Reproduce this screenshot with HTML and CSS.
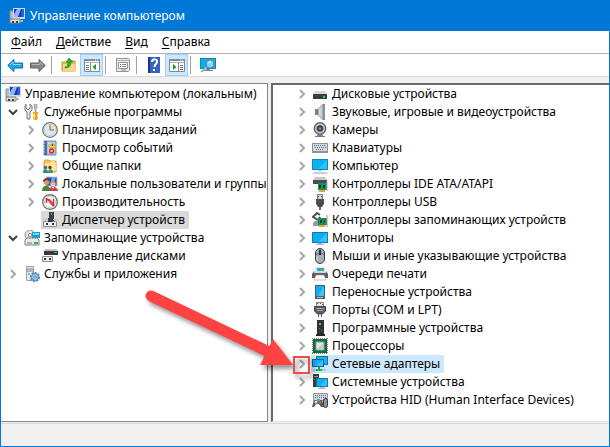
FILE: index.html
```html
<!DOCTYPE html>
<html lang="ru">
<head>
    <meta charset="UTF-8">
    <meta name="viewport" content="width=device-width, initial-scale=1.0">
    <title>Управление компьютером</title>
    <link rel="stylesheet" href="styles.css">
</head>
<body>
    <!-- Icon set -->
    <svg class="sprite" aria-hidden="true">
        <symbol id="chevron" viewBox="0 0 10 10"><path d="M3 1l4 4-4 4" fill="none" stroke="currentColor" stroke-width="2"/></symbol>
        <symbol id="i-manage" viewBox="0 0 16 16">
            <path d="M1 3h4v8H1z" fill="#b9bec4" stroke="#8b9097"/>
            <path d="M4 0h12v11H4z" fill="#d5d8dc"/><path d="M5 1h10v8H5z" fill="#1237b4"/><path d="M8 1h4l-3 8H5V6z" fill="#8fb4ff"/><path d="M13 1h2v8h-3z" fill="#2c62e0"/>
            <path d="M9 12h5v2H9z" fill="#b5b9bd"/><path d="M1 11h10v4H1z" fill="#dddbd2" stroke="#80858b"/><path d="M3 13h2v2H3zM7 13h2v2H7z" fill="#3c4148"/>
        </symbol>
        <symbol id="i-tools" viewBox="0 0 16 16">
            <path d="M2 0v4l2 2 2-2V0l2 2v4L6 8v7H3V8L1 6V2z" fill="#e2e5e8" stroke="#777d83"/>
            <path d="M10 0h3v4h-1v4h-1V4h-1z" fill="#bfc4c9" stroke="#7b8087" stroke-width=".5"/>
            <path d="M9 8h5v2l-1 1 1 3-1 2h-3l-1-2 1-3-1-1z" fill="#f0a21a"/><path d="M10 9h1v6h-1z" fill="#ffd878"/>
        </symbol>
        <symbol id="i-clock" viewBox="0 0 16 16">
            <circle cx="8" cy="8" r="7.3" fill="#f5f6f8" stroke="#70757b" stroke-width="1.3"/><circle cx="8" cy="8" r="5.7" fill="#dce8f2" stroke="#c2c6ca" stroke-width=".8"/>
            <path d="M8 8V2.5A5.500 5.500 0 0 1 13.500 8z" fill="#ffdc94"/><path d="M8 3v5h4" fill="none" stroke="#4e6c96"/>
        </symbol>
        <symbol id="i-events" viewBox="0 0 16 16">
            <path d="M2 1h12v14H2z" fill="#a9c4e4" stroke="#6c8cb2"/><path d="M2 1h3v14H2z" fill="#4a6e9d"/><path d="M1 3h2M1 6h2M1 9h2M1 12h2" stroke="#ddd"/>
            <path d="M6 3h7M6 8h3M6 10h2M6 12h3" stroke="#e8f1fb"/><path d="M10.500 2L14 8H7z" fill="#ffcd1c" stroke="#b78e1a" stroke-width=".5"/><path d="M10 4h1v2h-1z" fill="#333"/>
            <circle cx="9.500" cy="11" r="2.700" fill="#dd2c2c"/><path d="M8.500 10l2 2m0-2l-2 2" stroke="#fff" stroke-width=".8"/>
        </symbol>
        <symbol id="i-shared" viewBox="0 0 16 16">
            <path d="M2 3l1-1h4l1 1h6v11H2z" fill="#f2c45c" stroke="#d5a348"/><path d="M3 5h11v8H3z" fill="#ffe199"/><path d="M9 4h4" stroke="#fff"/>
            <circle cx="3.500" cy="9.500" r="1.700" fill="#42688c"/><circle cx="8" cy="9.500" r="1.700" fill="#684122"/><path d="M1 15c0-5 5-5 5 0z" fill="#188d9e"/><path d="M6 15c0-5 5-5 5 0z" fill="#2a9b76"/>
        </symbol>
        <symbol id="i-users" viewBox="0 0 16 16">
            <path d="M4 1h11v9H4z" fill="#174bbf" stroke="#bbc3ce"/><path d="M10 1h4l-3 8H8z" fill="#6ea5f8"/>
            <circle cx="4.500" cy="6" r="3" fill="#d89b66"/><path d="M1 6c0-5 6-5 7 0L5 4z" fill="#694027"/><circle cx="11" cy="8" r="2.500" fill="#efc39d"/><path d="M8 8c0-4 6-4 6 0l-3-2z" fill="#c69137"/>
            <path d="M0 15c0-7 8-7 9 0z" fill="#507e3c"/><path d="M7 15c0-6 8-6 9 0z" fill="#be4651"/><path d="M10 11l1 2 1-2z" fill="#fff"/>
        </symbol>
        <symbol id="i-perf" viewBox="0 0 16 16">
            <circle cx="8" cy="8" r="7.300" fill="#fff" stroke="#73777b" stroke-width="1.400"/><circle cx="8" cy="8" r="5.500" fill="#fff" stroke="#b9bdc1" stroke-width=".8"/><path d="M4.500 9V5l3 1 4 5V5" fill="none" stroke="#e02c2c" stroke-width="1.500"/><path d="M4 4l7 8" stroke="#c81d22"/>
        </symbol>
        <symbol id="i-devmgr" viewBox="0 0 16 16">
            <path d="M7 0h5v9H7z" fill="#3a3d40"/><path d="M9 1h1v2H9z" fill="#35d346"/><path d="M1 8l1-1h12l1 1z" fill="#bbb"/><path d="M1.500 9.500h13v5h-13z" fill="#f1f1f1" stroke="#8c8c8c"/><path d="M6 6h5v4H6z" fill="#3a3d40"/><path d="M4 11h2v2H4zM10 11h2v2h-2z" fill="#333"/>
        </symbol>
        <symbol id="i-storage" viewBox="0 0 16 16">
            <circle cx="6" cy="5" r="5" fill="#dfe3e7" stroke="#90969c"/><circle cx="6" cy="5" r="1.600" fill="#fff" stroke="#7e868e"/><path d="M8 2h8v6H8z" fill="#169fd3"/><path d="M9 3h6v2H9z" fill="#67d7f5"/>
            <path d="M1 10l2-2h10l2 2v5H1z" fill="#e8e9ea" stroke="#7d8186"/><path d="M3 13h5" stroke="#777"/><path d="M10 12h4v2h-4z" fill="#20bc3d"/>
        </symbol>
        <symbol id="i-diskmgr" viewBox="0 0 16 16">
            <path d="M3 1h11l2 2H2z" fill="#bfc1c3"/><path d="M2 3h14v4H2z" fill="#36393b"/><path d="M12 4h3v1h-3z" fill="#21d54a"/><path d="M.5 8.500h10v5H.5z" fill="#eee" stroke="#8e8e8e"/><path d="M2 10h2v2H2zM7 10h2v2H7z" fill="#333"/>
        </symbol>
        <symbol id="i-services" viewBox="0 0 16 16">
            <path d="M2.500.5h7v14h-7z" fill="#e5e9ed" stroke="#9ba2a8"/><path d="M3 3h6M3 5h6" stroke="#718493"/><path d="M4 8h2" stroke="#35a74a"/>
            <circle cx="11" cy="11" r="4" fill="none" stroke="#4f81ad" stroke-width="2" stroke-dasharray="2 1"/><circle cx="11" cy="11" r="3.500" fill="#a8cbe8" stroke="#5586b3"/><circle cx="11" cy="11" r="1.200" fill="#fff" stroke="#5586b3"/>
        </symbol>
        <symbol id="i-disk" viewBox="0 0 16 16"><path d="M3 5h10l2 3H1z" fill="#d6d8d9"/><path d="M1 8h14v5H1z" fill="#3b3d3f"/><path d="M11 10h2v2h-2z" fill="#20d64c"/></symbol>
        <symbol id="i-sound" viewBox="0 0 16 16"><path d="M3 5h3v6H3z" fill="#7b8085"/><path d="M6 5l5-5v16l-5-5z" fill="#c1c7cc" stroke="#858a8f" stroke-width=".7"/><path d="M11 0h2v16h-2z" fill="#8b9095"/><path d="M8 4v8" stroke="#e9ecef"/></symbol>
        <symbol id="i-camera" viewBox="0 0 16 16"><circle cx="8" cy="6.500" r="5.700" fill="#d6d8da" stroke="#606468" stroke-width="1.500"/><circle cx="8" cy="6.500" r="3.300" fill="#30353c" stroke="#747b82"/><circle cx="8" cy="6.500" r="1.300" fill="#739aca"/><path d="M6 12l-1 2H3v1h10v-1h-2l-1-2z" fill="#777b80"/></symbol>
        <symbol id="i-keyboard" viewBox="0 0 16 16"><path d="M0 3h16v10H0z" fill="#89949e"/><path d="M1 4h14v7H1z" fill="#d3dae0"/><path d="M2 5.500h12M3 7.500h11M4 9.500h8" stroke="#68737d" stroke-dasharray="1 1"/></symbol>
        <symbol id="i-computer" viewBox="0 0 16 16"><path d="M0 1h16v11H0z" fill="#1683b9"/><path d="M1 2h14v9H1z" fill="#09b4f3"/><path d="M15 2v9H6z" fill="#25c5ff"/><path d="M6 12h4v1H6z" fill="#bbb"/><path d="M2 14h12l2 2H0z" fill="#bdd0dd"/></symbol>
        <symbol id="i-ide" viewBox="0 0 16 16"><path d="M3 1h10l2 3H1z" fill="#c5c7c8"/><path d="M1 4h14v4H1z" fill="#4b4e50"/><path d="M6 7h9v7H6z" fill="#15905e"/><path d="M7 9h2v3H7zM11 9h2v3h-2z" fill="#073d2c"/><path d="M15 5v10" stroke="#aaa"/><path d="M7 14h6v2H7z" fill="#f1a31d"/></symbol>
        <symbol id="i-usb" viewBox="0 0 16 16"><path d="M5.500.5h5v5h-5z" fill="#d8dadd" stroke="#777b80"/><path d="M6 2h1v1H6zM9 2h1v1H9z" fill="#555"/><path d="M4 5h8v5l-2 3H6l-2-3z" fill="#494d50"/><path d="M7 13h2v3H7z" fill="#686d70"/></symbol>
        <symbol id="i-storctl" viewBox="0 0 16 16"><path d="M8 3L5 1 1 5l5 3 2-3" fill="none" stroke="#4d5052" stroke-width="2"/><path d="M1 11l2-2h5v5H1z" fill="#999c9e"/><path d="M6 6h9v7H6z" fill="#15905e"/><path d="M8 8h2v3H8zM12 8h1v3h-1z" fill="#073d2c"/><path d="M15 3v12" stroke="#999"/><path d="M7 13h6v2H7z" fill="#f1a31d"/></symbol>
        <symbol id="i-monitor" viewBox="0 0 16 16"><path d="M0 2h16v11H0z" fill="#167caf"/><path d="M1 3h14v9H1z" fill="#09aef0"/><path d="M15 3v9H6z" fill="#2dc5ff"/><path d="M6 13h4v1H6zM4 14h8v1H4z" fill="#a5b5c0"/></symbol>
        <symbol id="i-mouse" viewBox="0 0 16 16"><rect x="3.500" y=".5" width="9" height="15" rx="4.500" fill="#a7afb8" stroke="#363b40"/><path d="M4 6h8M8 1v5" stroke="#59616a"/><path d="M7 2h2v5H7z" fill="#272b2f"/><path d="M5 8v4" stroke="#e0e5ea"/></symbol>
        <symbol id="i-printer" viewBox="0 0 16 16"><path d="M3 1h10v5H3z" fill="#d7e8f2"/><path d="M5 2h3v3H5z" fill="#28a7d9"/><path d="M8 2h4v3H8z" fill="#49ad73"/><path d="M2 5h12l2 3v4H0V8z" fill="#5a5e62"/><path d="M2 5h12v2H2z" fill="#d6d9dc"/><path d="M4 9h8l2 5H2z" fill="#fff" stroke="#999" stroke-width=".6"/></symbol>
        <symbol id="i-portable" viewBox="0 0 16 16"><path d="M3 1h10v14H3z" fill="#4f5d67"/><path d="M4 2h8v10H4z" fill="#12aef2"/><path d="M12 2v10H6z" fill="#39c3ff"/><path d="M5 13.500h6" stroke="#bac4ca"/></symbol>
        <symbol id="i-port" viewBox="0 0 16 16"><path d="M4.500.5h7v4h-7z" fill="#e6e7e8" stroke="#888"/><path d="M5 1h1v1H5zM8 1h1v1H8zM10 2h1v1h-1z" fill="#555"/><path d="M2.500 4.500h11V9l-3 3h-5l-3-3z" fill="#5b5f62" stroke="#414447"/><path d="M4 6.500h8M5 8.500h6" stroke="#a2a5a7"/><path d="M6 12h1v3H6zM9 12h1v3H9z" fill="#555"/></symbol>
        <symbol id="i-software" viewBox="0 0 16 16"><path d="M5 0h7v14H5z" fill="#303335"/><path d="M7 3h2v2H7z" fill="#29ea44"/><path d="M7 8h1v1H7zM9 10h1v1H9z" fill="#777"/><path d="M4 14h9v2H4z" fill="#25282a"/></symbol>
        <symbol id="i-cpu" viewBox="0 0 16 16"><path d="M0 .5h16M0 15.500h16M.5 0v16M15.500 0v16" stroke="#9d8c42" stroke-dasharray="1 1"/><path d="M1 1h14v14H1z" fill="#0c6b4d"/><path d="M4 4h8v8H4z" fill="#e6e8e7" stroke="#8ca49b"/><path d="M11 5v6H5z" fill="#c7cccb"/></symbol>
        <symbol id="i-network" viewBox="0 0 16 16"><path d="M4 0h12v9H4z" fill="#0d76b4"/><path d="M5 1h10v7H5z" fill="#18b4f2"/><path d="M0 3h12v8H0z" fill="#0b669f"/><path d="M1 4h10v6H1z" fill="#17adef"/><path d="M11 4v6H4z" fill="#38c5fb"/><path d="M7 11v2" stroke="#22a959" stroke-width="2"/><path d="M1 14h13" stroke="#8fa2a9"/><path d="M4 13h6v2H4z" fill="#22a959"/></symbol>
        <symbol id="i-system" viewBox="0 0 16 16"><path d="M1 0h6v13H1z" fill="#3b3e40"/><path d="M2 2.500h4" stroke="#999"/><path d="M2 5h1v1H2z" fill="#23e13f"/><path d="M4 4h12v9H4z" fill="#1474a4"/><path d="M5 5h10v7H5z" fill="#11aef1"/><path d="M15 5v7H8z" fill="#30c3ff"/><path d="M8 13h4v1H8zM6 14h8v1H6z" fill="#aebdc6"/></symbol>
        <symbol id="i-hid" viewBox="0 0 16 16"><path d="M1.500 1.500h14v7h-14z" fill="#d3d9de" stroke="#8f979d"/><path d="M3 3.500h12M3 5.500h12" stroke="#636b71" stroke-dasharray="1 1"/><path d="M2 8h8l2 7H9l-2-3H4l-2 3H0z" fill="#50595f"/><circle cx="4" cy="10" r="1.500" fill="#d6e0e7"/><circle cx="8" cy="10" r="1.500" fill="#e4573d"/><path d="M5 7h3v2H5z" fill="#2ab1ea"/><rect x="11.500" y="6.500" width="4" height="9" rx="2" fill="#8b949d" stroke="#34383b"/></symbol>
        <symbol id="i-back" viewBox="0 0 16 16"><path d="M.7 8.500L7 2.500v3.500h8.500v5H7v3.500z" fill="#1aa9e4" stroke="#096da8" stroke-linejoin="round"/><path d="M3 8l3-3v2.500h8" fill="none" stroke="#81dafa"/></symbol>
        <symbol id="i-forward" viewBox="0 0 16 16"><path d="M15.300 8.500L9 2.500v3.500H.5v5H9v3.500z" fill="#858585" stroke="#606060" stroke-linejoin="round"/><path d="M2 7.500h8V5l3 3" fill="none" stroke="#b4b4b4"/></symbol>
        <symbol id="i-up" viewBox="0 0 16 16"><path d="M1 5h6l1-1h6v10H1z" fill="#e4b656" stroke="#c49a44"/><path d="M2 7h12v7H2z" fill="#f6d783"/><path d="M4 10c2 0 3-2 3-5H5l3-4 4 4h-2c0 4-2 6-6 6z" fill="#24b324" stroke="#158116" stroke-width=".5"/></symbol>
        <symbol id="i-tree" viewBox="0 0 16 16"><path d="M.5 2.500h15v12H.5z" fill="#fff" stroke="#858a90"/><path d="M0 2h16v2H0z" fill="#858a90"/><path d="M1 5.500h14" stroke="#aeb3b8"/><path d="M11 3h1M13 3h1" stroke="#fff"/><path d="M6.500 6v8" stroke="#858a90"/><path d="M2 8.500h3M2 10.500h3M2 12.500h3" stroke="#687078"/><path d="M12 7v6l-3.500-3z" fill="#169b27"/></symbol>
        <symbol id="i-props" viewBox="0 0 16 16"><path d="M1.500 1.500h12l1 1v11l-1 1h-12z" fill="#eeeeef" stroke="#90959a"/><path d="M2 3.500h12" stroke="#a9adb1"/><path d="M3.500 5.500h9v6h-9z" fill="#fff" stroke="#8d949c"/><path d="M5 7h1v1H5zM5 9h1v1H5z" fill="#496d99"/><path d="M7 7.500h4M7 9.500h4M6 13h5" stroke="#888"/></symbol>
        <symbol id="i-help" viewBox="0 0 16 16"><path d="M2 0h12v16H2z" fill="#3a62c0"/><path d="M2 0h2v16H2z" fill="#17388a"/><path d="M6 5c0-4 6-3 5 0 0 2-2.500 2-2.500 5" fill="none" stroke="#fff" stroke-width="2"/><path d="M7 12h2v2H7z" fill="#fff"/></symbol>
        <symbol id="i-action" viewBox="0 0 16 16"><path d="M.5 2.500h15v12H.5z" fill="#fff" stroke="#858a90"/><path d="M0 2h16v2H0z" fill="#858a90"/><path d="M1 5.500h14" stroke="#aeb3b8"/><path d="M11 3h1M13 3h1" stroke="#fff"/><path d="M9.500 6v8" stroke="#858a90"/><path d="M11 8.500h3M11 10.500h3M11 12.500h3" stroke="#687078"/><path d="M4 7v6l3.500-3z" fill="#169b27"/></symbol>
        <symbol id="i-scan" viewBox="0 0 18 16"><path d="M1 1h16v11H1z" fill="#1385b9"/><path d="M2 2h14v9H2z" fill="#12aee9"/><path d="M7 12h4v1H7zM5 13h9v1H5z" fill="#788d9b"/><path d="M8 10l-6 5" stroke="#9db1bf" stroke-width="2"/><circle cx="11" cy="7" r="4" fill="#80d6f5" stroke="#5789a7" stroke-width="1.200"/><path d="M9 6l3-1" stroke="#fff"/></symbol>
    </svg>

    <div class="window">
        <header class="titlebar">
            <svg class="icon"><use href="#i-manage"/></svg>
            <h1>Управление компьютером</h1>
        </header>
        <nav class="menu">
            <button type="button"><u>Ф</u>айл</button>
            <button type="button"><u>Д</u>ействие</button>
            <button type="button"><u>В</u>ид</button>
            <button type="button"><u>С</u>правка</button>
        </nav>
        <div class="toolbar">
            <button type="button" aria-label="Назад"><svg class="icon"><use href="#i-back"/></svg></button>
            <button type="button" aria-label="Вперед"><svg class="icon"><use href="#i-forward"/></svg></button>
            <span class="sep"></span>
            <button type="button" aria-label="Вверх"><svg class="icon"><use href="#i-up"/></svg></button>
            <button type="button" class="on" aria-label="Дерево консоли"><svg class="icon"><use href="#i-tree"/></svg></button>
            <span class="sep"></span>
            <button type="button" aria-label="Свойства"><svg class="icon"><use href="#i-props"/></svg></button>
            <span class="sep"></span>
            <button type="button" aria-label="Помощь"><svg class="icon"><use href="#i-help"/></svg></button>
            <button type="button" class="on" aria-label="Панель действий"><svg class="icon"><use href="#i-action"/></svg></button>
            <span class="sep"></span>
            <button type="button" aria-label="Обновить конфигурацию"><svg class="icon wide"><use href="#i-scan"/></svg></button>
        </div>

        <main class="panes">
            <section class="pane console">
                <div class="row root"><svg class="icon"><use href="#i-manage"/></svg><span class="label">Управление компьютером (локальным)</span></div>
                <ul class="tree">
                    <li>
                        <div class="row"><button type="button" class="toggle open" aria-label="Свернуть"><svg><use href="#chevron"/></svg></button><svg class="icon"><use href="#i-tools"/></svg><span class="label">Служебные программы</span></div>
                        <ul>
                            <li class="row"><button type="button" class="toggle" aria-label="Развернуть"><svg><use href="#chevron"/></svg></button><svg class="icon"><use href="#i-clock"/></svg><span class="label">Планировщик заданий</span></li>
                            <li class="row"><button type="button" class="toggle" aria-label="Развернуть"><svg><use href="#chevron"/></svg></button><svg class="icon"><use href="#i-events"/></svg><span class="label">Просмотр событий</span></li>
                            <li class="row"><button type="button" class="toggle" aria-label="Развернуть"><svg><use href="#chevron"/></svg></button><svg class="icon"><use href="#i-shared"/></svg><span class="label">Общие папки</span></li>
                            <li class="row"><button type="button" class="toggle" aria-label="Развернуть"><svg><use href="#chevron"/></svg></button><svg class="icon"><use href="#i-users"/></svg><span class="label">Локальные пользователи и группы</span></li>
                            <li class="row"><button type="button" class="toggle" aria-label="Развернуть"><svg><use href="#chevron"/></svg></button><svg class="icon"><use href="#i-perf"/></svg><span class="label">Производительность</span></li>
                            <li class="row leaf"><span class="item current"><svg class="icon"><use href="#i-devmgr"/></svg><span class="label">Диспетчер устройств</span></span></li>
                        </ul>
                    </li>
                    <li>
                        <div class="row"><button type="button" class="toggle open" aria-label="Свернуть"><svg><use href="#chevron"/></svg></button><svg class="icon"><use href="#i-storage"/></svg><span class="label">Запоминающие устройства</span></div>
                        <ul>
                            <li class="row leaf"><span class="item"><svg class="icon"><use href="#i-diskmgr"/></svg><span class="label">Управление дисками</span></span></li>
                        </ul>
                    </li>
                    <li class="row"><button type="button" class="toggle" aria-label="Развернуть"><svg><use href="#chevron"/></svg></button><svg class="icon"><use href="#i-services"/></svg><span class="label">Службы и приложения</span></li>
                </ul>
            </section>

            <section class="pane devices">
                <ul id="device-list"></ul>
            </section>
        </main>
        <footer class="statusbar"></footer>
    </div>

    <script>
        const devices = [
            ['disk', 'Дисковые устройства'],
            ['sound', 'Звуковые, игровые и видеоустройства'],
            ['camera', 'Камеры'],
            ['keyboard', 'Клавиатуры'],
            ['computer', 'Компьютер'],
            ['ide', 'Контроллеры IDE ATA/ATAPI'],
            ['usb', 'Контроллеры USB'],
            ['storctl', 'Контроллеры запоминающих устройств'],
            ['monitor', 'Мониторы'],
            ['mouse', 'Мыши и иные указывающие устройства'],
            ['printer', 'Очереди печати'],
            ['portable', 'Переносные устройства'],
            ['port', 'Порты (COM и LPT)'],
            ['software', 'Программные устройства'],
            ['cpu', 'Процессоры'],
            ['network', 'Сетевые адаптеры'],
            ['system', 'Системные устройства'],
            ['hid', 'Устройства HID (Human Interface Devices)']
        ];

        // Arrow and frame pointing at the expand button
        const pointer = `
            <svg class="pointer" viewBox="0 0 180 100" aria-hidden="true">
                <path d="M16 20L134 76" stroke="#ff4343" stroke-width="11" stroke-linecap="round"/>
                <path d="M138 63l20 26h-33z" fill="#ff4343"/>
                <path d="M159 81h15v16h-15z" fill="none" stroke="#f04a4a" stroke-width="2"/>
            </svg>`;

        document.getElementById('device-list').innerHTML = devices.map(([icon, name]) => {
            const selected = icon === 'network';
            return `<li class="row">
                <button type="button" class="toggle" aria-label="Развернуть"><svg><use href="#chevron"/></svg></button>
                <span class="item${selected ? ' selected' : ''}"><svg class="icon"><use href="#i-${icon}"/></svg><span class="label">${name}</span></span>
                ${selected ? pointer : ''}
            </li>`;
        }).join('');
    </script>
</body>
</html>
```
FILE: styles.css
```css
* {
    box-sizing: border-box;
}
body {
    margin: 0;
    font-family: "Noto Sans", "Open Sans", sans-serif;
    font-size: 12px;
    line-height: 18px;
    color: #000;
}
.sprite {
    display: none;
}
.window {
    min-height: 100vh;
    display: flex;
    flex-direction: column;
    background: #f0f0f0;
    border: 1px solid #0078d7;
    border-top: 0;
}
button {
    font: inherit;
    color: inherit;
    background: none;
    border: 0;
    padding: 0;
}
ul {
    list-style: none;
    margin: 0;
    padding: 0;
}
.icon {
    width: 16px;
    height: 16px;
    flex: none;
}
.icon.wide {
    width: 18px;
}
.titlebar {
    display: flex;
    align-items: center;
    gap: 5px;
    height: 31px;
    padding: 0 8px;
    background: #0078d7;
    color: #fff;
}
.titlebar h1 {
    margin: 0;
    font-size: 12px;
    font-weight: normal;
}
.menu {
    display: flex;
    gap: 14px;
    height: 23px;
    padding: 0 10px;
    background: #fff;
    border-bottom: 1px solid #b0b0b8;
}
.menu u {
    text-underline-offset: 2px;
}
.toolbar {
    display: flex;
    align-items: center;
    height: 23px;
    padding-left: 2px;
    background: #fff;
    border-bottom: 1px solid #dcdcdc;
}
.toolbar button {
    display: flex;
    align-items: center;
    justify-content: center;
    width: 23px;
    height: 22px;
}
.toolbar .on {
    background: #cce8ff;
    border: 1px solid #99d1ff;
}
.toolbar .sep {
    width: 1px;
    height: 18px;
    margin: 0 5px 0 2px;
    background: #a0a0a0;
}
.panes {
    flex: 1;
    display: flex;
    gap: 3px;
    padding-top: 6px;
}
.pane {
    background: #fff;
}
.console {
    flex: 0 0 267px;
    min-width: 0;
    border: 1px solid #828790;
    border-left: 0;
    padding: 1px 0 0 4px;
}
.devices {
    flex: 1;
    min-width: 0;
    border-top: 2px solid #696969;
    border-left: 2px solid #696969;
    border-bottom: 1px solid #e3e3e3;
    padding-left: 23px;
}
.row {
    position: relative;
    display: flex;
    align-items: center;
    height: 18px;
    white-space: nowrap;
}
.label {
    padding-left: 4px;
}
.tree ul {
    padding-left: 18px;
}
.leaf {
    padding-left: 18px;
}
.toggle {
    flex: none;
    width: 19px;
    height: 18px;
    display: flex;
    align-items: center;
    padding-left: 3px;
    color: #a6a6a6;
}
.toggle svg {
    width: 10px;
    height: 10px;
}
.toggle.open {
    color: #404040;
}
.toggle.open svg {
    transform: rotate(90deg);
}
.item {
    display: flex;
    align-items: center;
    height: 18px;
    padding: 0 4px 0 1px;
}
.devices .toggle {
    width: 15px;
    padding-left: 1px;
}
.current {
    background: #d9d9d9;
}
.selected {
    background: #cce8ff;
}
.pointer {
    position: absolute;
    right: calc(100% - 19px);
    bottom: -3px;
    width: 180px;
    height: 100px;
    z-index: 1;
    pointer-events: none;
    filter: drop-shadow(3px 4px 2px rgba(0, 0, 0, 0.4));
}
.statusbar {
    height: 23px;
    margin-top: 1px;
    border-top: 1px solid #d7d7d7;
}
```
